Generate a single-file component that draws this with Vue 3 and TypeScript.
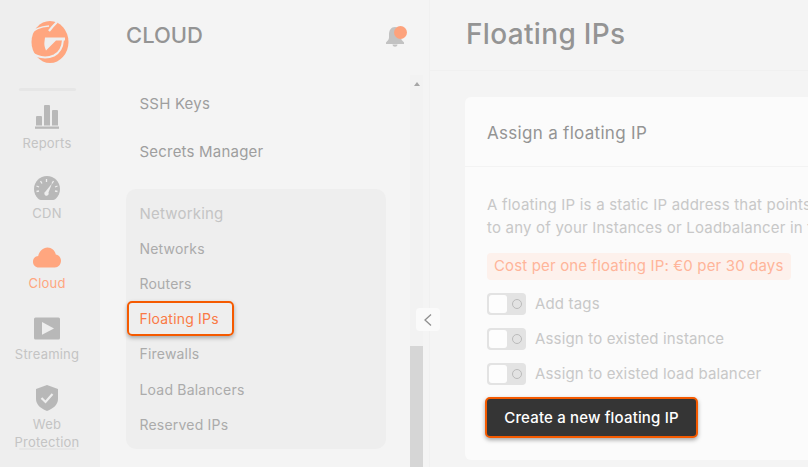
<template>
  <div class="page">
    <aside class="rail">
      <div class="rail__logo">
        <svg width="44" height="48" viewBox="28 18 44 48">
          <ellipse class="logo-fill" cx="50" cy="42" rx="18.500" ry="21" />
          <g class="logo-cut">
            <!-- swoosh gap at the top left -->
            <path d="M29 35C34 29 41 26.500 49 26" stroke-width="1.600" fill="none" />
            <!-- notch between the swoosh and the right arc -->
            <path d="M57 22C55 24 52 27 49 31" stroke-width="2.200" fill="none" />
            <!-- tail gap at the bottom -->
            <path d="M29 50C36 58 46 59 54 55.500C60 52.500 62.500 47 63 40" stroke-width="2" fill="none" />
            <!-- G bar with the wedge under it -->
            <path d="M45 37.500H65V40.500H56L46 50.500C44.500 47 44 44 44.500 41.500Z" stroke="none" />
          </g>
        </svg>
      </div>
      <div class="rail__divider"></div>

      <div v-for="item in railItems" :key="item.label" class="rail__item" :class="{ 'rail__item--active': item.active }">
        <svg class="rail__icon" width="32" height="28" viewBox="0 0 32 28" v-html="item.icon"></svg>
        <div class="rail__label">{{ item.label }}</div>
      </div>

      <div class="rail__divider rail__divider--bottom"></div>
    </aside>

    <section class="menu">
      <header class="menu__head">
        <div class="menu__title">CLOUD</div>
        <div class="bell">
          <svg width="20" height="21" viewBox="0 0 20 21">
            <path d="M10 1C6 1 4 4.500 4 8V11.500C4 13.500 2.500 15 1 16.500V18H19V16.500C17.500 15 16 13.500 16 11.500V8C16 4.500 14 1 10 1Z" fill="#c2c2c2" />
            <path d="M7.500 18.500H12.500C12.300 20 11.300 20.700 10 20.700C8.700 20.700 7.700 20 7.500 18.500Z" fill="#c2c2c2" />
          </svg>
          <span class="bell__dot"></span>
        </div>
      </header>

      <div class="menu__body">
        <nav class="menu__list">
          <a class="menu__link">SSH Keys</a>
          <a class="menu__link">Secrets Manager</a>

          <div class="group">
            <div class="group__title">Networking</div>
            <a
              v-for="link in networkLinks"
              :key="link"
              class="group__link"
              :class="{ 'group__link--active': link === activeLink }"
            >{{ link }}</a>
          </div>
        </nav>

        <div class="scrollbar">
          <span class="scrollbar__arrow"></span>
          <span class="scrollbar__thumb"></span>
        </div>
      </div>
    </section>

    <main class="content">
      <header class="content__head">
        <h1 class="content__title">Floating IPs</h1>
      </header>

      <div class="content__body">
        <div class="card">
          <div class="card__head">Assign a floating IP</div>
          <div class="card__body">
            <p class="card__text">
              <span>A floating IP is a static IP address that points</span>
              <span>to any of your Instances or Loadbalancer in the</span>
            </p>
            <div class="cost">Cost per one floating IP: €0 per 30 days</div>
            <div class="switches">
              <label v-for="option in options" :key="option" class="switch">
                <span class="switch__track">
                  <span class="switch__knob"></span>
                  <span class="switch__ring"></span>
                </span>
                <span class="switch__label">{{ option }}</span>
              </label>
            </div>
            <button class="create-btn">Create a new floating IP</button>
          </div>
        </div>
      </div>
    </main>

    <button class="collapse" aria-label="Collapse">
      <svg width="10" height="14" viewBox="0 0 10 14">
        <path d="M8 1.500L2 7L8 12.500" fill="none" stroke="#8f8f8f" stroke-width="1.300" />
      </svg>
    </button>
  </div>
</template>

<script setup lang="ts">
interface RailItem {
  label: string;
  icon: string;
  active?: boolean;
}

const railItems: RailItem[] = [
  {
    label: 'Reports',
    icon: '<path d="M5 14a1 1 0 0 1 1-1h4a1 1 0 0 1 1 1v8.500H5ZM13 3a1 1 0 0 1 1-1h4a1 1 0 0 1 1 1v19.500h-6ZM21 8a1 1 0 0 1 1-1h4a1 1 0 0 1 1 1v14.500h-6Z"/><rect x="4" y="23.500" width="24" height="2.300"/>'
  },
  {
    label: 'CDN',
    icon: '<path d="M16 3C8.800 3 3 8.800 3 16c0 3.800 1.500 7 4 9.500C8 26.500 9.500 27 11 27h10c1.500 0 3-.5 4-1.500 2.500-2.500 4-5.700 4-9.500C29 8.800 23.200 3 16 3Z"/><path d="M15.500 6v3M9.500 8l1.500 2.500M5.500 13l2.500 1M5.500 18.500l2.500-.5M22.500 8 21 10.500M26.500 13 24 14M26.500 18.500 24 18" stroke="#eee" stroke-width="1.300" fill="none"/><path d="M21 10.500 17.500 19.500a2.200 2.200 0 1 1-3-1Z" fill="#eee"/>'
  },
  {
    label: 'Cloud',
    active: true,
    icon: '<path d="M8 24.500c-3.800 0-6-2.600-6-5.800 0-3.100 2.200-5.500 5.200-5.700C8.200 8.400 12 4.500 16.500 4.500c4.200 0 7.500 3 8.300 7 2.900.3 5.200 3 5.200 6.300 0 3.600-2.600 6.700-6.200 6.700Z"/>'
  },
  {
    label: 'Streaming',
    icon: '<rect x="3" y="3.400" width="26" height="22" rx="1.500"/><path d="M11 8 23 14.400 11 20.800Z" fill="#eee"/>'
  },
  {
    label: 'Web Protection',
    icon: '<path d="M16 1 27 5v10c0 5.500-4.500 9.500-11 12C9.500 24.500 5 20.500 5 15V5Z"/><path d="M10.500 14 14.500 18 21.500 10" fill="none" stroke="#eee" stroke-width="2.200"/>'
  }
];

const networkLinks: string[] = [
  'Networks',
  'Routers',
  'Floating IPs',
  'Firewalls',
  'Load Balancers',
  'Reserved IPs'
];

const activeLink = 'Floating IPs';

const options: string[] = [
  'Add tags',
  'Assign to existed instance',
  'Assign to existed load balancer'
];
</script>

<style>
html,
body {
  margin: 0;
  height: 100%;
  overflow: hidden;
}
</style>

<style scoped>
.page {
  position: relative;
  display: flex;
  width: 808px;
  height: 467px;
  overflow: hidden;
  background: #f4f4f4;
  font-family: Inter, "Liberation Sans", sans-serif;
  letter-spacing: 0.2px;
}

.rail {
  flex: 0 0 100px;
  display: flex;
  flex-direction: column;
  align-items: center;
  background: #eeeeee;
  padding-right: 6px;
  box-sizing: border-box;
}

.rail__logo {
  height: 48px;
  margin: 18px 0 22px 6px;
}

.logo-fill {
  fill: #ffa67f;
}

.logo-cut {
  fill: #eeeeee;
  stroke: #eeeeee;
}

.rail__divider {
  flex: none;
  width: 57px;
  height: 3px;
  background: #e6e6e6;
  border-radius: 2px;
}

.rail__divider--bottom {
  height: 2px;
  margin-top: 6px;
}

.rail__item {
  flex: none;
  display: flex;
  flex-direction: column;
  align-items: center;
  width: 80px;
  height: 70.200px;
  padding-top: 12px;
  box-sizing: border-box;
  color: #c4c4c4;
  text-align: center;
}

.rail__item:last-of-type {
  height: auto;
}

.rail__icon {
  fill: #b8b8b8;
  height: 28px;
  flex: none;
}

.rail__item--active .rail__icon {
  fill: #ffa67f;
}

.rail__item--active {
  color: #ffa67f;
}

.rail__label {
  margin-top: 3px;
  font-size: 13px;
  line-height: 18px;
}

.menu {
  flex: 0 0 330px;
  display: flex;
  flex-direction: column;
  border-right: 1px solid #f0f0f0;
  box-sizing: border-box;
}

.menu__head {
  flex: 0 0 71px;
  display: flex;
  align-items: center;
  justify-content: space-between;
  padding: 0 24px 0 26px;
}

.menu__title {
  padding-bottom: 2px;
  font-size: 22px;
  font-weight: 500;
  letter-spacing: 0;
  color: #949494;
}

.bell {
  position: relative;
  width: 20px;
  height: 21px;
  margin-top: 2px;
}

.bell__dot {
  position: absolute;
  top: 0;
  right: -2px;
  width: 13px;
  height: 13px;
  border-radius: 50%;
  background: #fda27c;
}

.menu__body {
  flex: 1;
  display: flex;
  min-height: 0;
}

.menu__list {
  width: 310px;
  padding: 8px 0 0 26px;
  box-sizing: border-box;
  display: flex;
  flex-direction: column;
}

.menu__link {
  flex: none;
  height: 48px;
  padding-left: 13.500px;
  display: flex;
  align-items: center;
  font-size: 15px;
  color: #9e9e9e;
}

.group {
  flex: none;
  width: 260px;
  height: 260px;
  margin-top: 14px;
  padding: 7px 0 0;
  box-sizing: border-box;
  border-radius: 10px;
  background: #eeeeee;
}

.group__title {
  height: 35px;
  padding-left: 13.500px;
  line-height: 35px;
  font-size: 15px;
  color: #c4c4c4;
}

.group__link {
  display: block;
  height: 35.150px;
  padding-left: 12.500px;
  line-height: 31px;
  font-size: 14px;
  color: #ababab;
  box-sizing: border-box;
  border: 2px solid transparent;
  border-left-width: 1px;
}

.group__link--active {
  width: 107px;
  margin-left: 1px;
  padding-left: 10.500px;
  border: 2px solid #f55a00;
  border-radius: 5px;
  color: #fa7a45;
  box-shadow: 0 2px 4px rgba(0, 0, 0, 0.3);
}

.scrollbar {
  width: 13px;
  margin-left: 0;
  display: flex;
  flex-direction: column;
  align-items: center;
  background: #f2f2f2;
  margin-top: 4px;
}

.scrollbar__arrow {
  width: 0;
  height: 0;
  margin-top: 7px;
  border-left: 3.500px solid transparent;
  border-right: 3.500px solid transparent;
  border-bottom: 4px solid #a6a6a6;
}

.scrollbar__thumb {
  width: 100%;
  flex: 1;
  margin-top: 260px;
  background: #d6d6d6;
}

.content {
  flex: 1;
  min-width: 0;
  display: flex;
  flex-direction: column;
}

.content__head {
  flex: 0 0 71px;
  box-sizing: border-box;
  padding-left: 36px;
  display: flex;
  align-items: center;
  border-bottom: 1px solid #f0f0f0;
}

.content__title {
  margin: 0;
  padding-bottom: 2px;
  font-size: 28px;
  font-weight: 500;
  letter-spacing: 0.33px;
  color: #949494;
  white-space: nowrap;
}

.content__body {
  flex: 1;
  padding: 26px 0 0 35px;
  box-sizing: border-box;
  overflow: hidden;
}

.card {
  width: 500px;
  height: 363px;
  border-radius: 6px;
  background: #fbfbfb;
}

.card__head {
  height: 70px;
  padding-left: 22px;
  line-height: 72px;
  font-size: 17px;
  letter-spacing: 0.3px;
  color: #949494;
  border-bottom: 1px solid #f3f3f3;
  box-sizing: border-box;
}

.card__body {
  padding: 26px 0 0 22px;
}

.card__text {
  margin: 0;
  font-size: 15px;
  line-height: 23px;
  color: #c8c8c8;
  white-space: nowrap;
}

.card__text span {
  display: block;
}

.cost {
  width: 304px;
  height: 27px;
  margin-top: 14px;
  padding-left: 7px;
  box-sizing: border-box;
  line-height: 25px;
  font-size: 15px;
  letter-spacing: 0.15px;
  white-space: nowrap;
  color: #ffb59a;
  background: #fdf1ec;
  border-radius: 4px;
}

.switches {
  margin-top: 13px;
  display: flex;
  flex-direction: column;
  gap: 13px;
}

.switch {
  display: flex;
  align-items: center;
  height: 22px;
}

.switch__track {
  position: relative;
  width: 39px;
  height: 22px;
  flex: none;
  background: #e3e3e3;
  border-radius: 4px;
}

.switch__knob {
  position: absolute;
  top: 2px;
  left: 2px;
  width: 18px;
  height: 18px;
  border-radius: 3px;
  background: #fdfdfd;
}

.switch__ring {
  position: absolute;
  top: 6px;
  left: 25px;
  width: 10px;
  height: 10px;
  box-sizing: border-box;
  border: 1px solid #bbbbbb;
  border-radius: 50%;
}

.switch__label {
  margin-left: 9px;
  padding-bottom: 2px;
  font-size: 15px;
  letter-spacing: 0.16px;
  color: #c8c8c8;
  white-space: nowrap;
}

.create-btn {
  display: block;
  width: 213px;
  height: 41px;
  margin: 12px 0 0 -2px;
  padding: 0;
  box-sizing: border-box;
  border: 2px solid #f55a00;
  border-radius: 5px;
  background: #353535;
  color: #ffffff;
  font-family: inherit;
  font-size: 15px;
  font-weight: 500;
  letter-spacing: 0.17px;
  box-shadow: 0 2px 4px rgba(0, 0, 0, 0.35);
}

.collapse {
  position: absolute;
  top: 308px;
  left: 416px;
  width: 24px;
  height: 23px;
  padding: 0;
  display: flex;
  align-items: center;
  justify-content: center;
  border: 0;
  border-radius: 4px;
  background: #fafafa;
}
</style>
